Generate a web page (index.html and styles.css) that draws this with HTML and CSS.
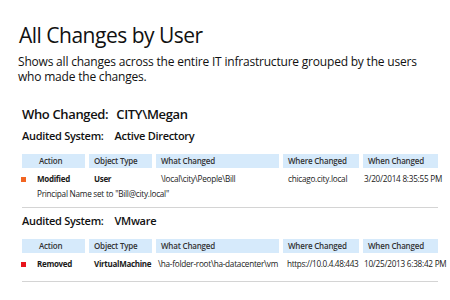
FILE: index.html
```html
<!DOCTYPE html>
<html>
<head>
<meta charset="utf-8">
<link rel="stylesheet" href="styles.css">
</head>
<body>
<div class="page">
  <h1 class="title">All Changes by User</h1>
  <p class="desc">Shows all changes across the entire IT infrastructure grouped by the users who made the changes.</p>

  <div class="who"><span>Who Changed:</span><span>CITY\Megan</span></div>

  <section class="system">
    <div class="sys-title"><span>Audited System:</span><span>Active Directory</span></div>
    <div class="grid">
      <div class="th th-action">Action</div>
      <div class="th">Object Type</div>
      <div class="th">What Changed</div>
      <div class="th">Where Changed</div>
      <div class="th">When Changed</div>

      <div class="td td-action"><span class="mark mark-modified"></span><b>Modified</b></div>
      <div class="td"><b>User</b></div>
      <div class="td">\local\city\People\Bill</div>
      <div class="td">chicago.city.local</div>
      <div class="td td-when">3/20/2014 8:35:55 PM</div>

      <div class="detail">Principal Name set to "Bill@city.local"</div>
    </div>
  </section>

  <section class="system">
    <div class="sys-title"><span>Audited System:</span><span>VMware</span></div>
    <div class="grid">
      <div class="th th-action">Action</div>
      <div class="th">Object Type</div>
      <div class="th">What Changed</div>
      <div class="th">Where Changed</div>
      <div class="th">When Changed</div>

      <div class="td td-action"><span class="mark mark-removed"></span><b>Removed</b></div>
      <div class="td"><b>VirtualMachine</b></div>
      <div class="td td-what">\ha-folder-root\ha-datacenter\vm</div>
      <div class="td td-where">https://10.0.4.48:443</div>
      <div class="td td-when">10/25/2013 6:38:42 PM</div>
    </div>
  </section>
</div>
</body>
</html>
```

FILE: styles.css
```css
html, body {
  margin: 0;
  padding: 0;
  background: #ffffff;
}
body {
  font-family: "Open Sans", "Noto Sans", sans-serif;
  color: #111;
}
.page {
  padding: 20px 0 0 19px;
  width: 431px;
}
.title {
  margin: 0;
  font-size: 21px;
  font-weight: 400;
  line-height: 30px;
  letter-spacing: -0.5px;
}
.desc {
  margin: 4px 0 0 -1px;
  font-size: 12px;
  line-height: 15px;
  max-width: 405px;
  letter-spacing: -0.2px;
}
.who {
  margin: 21px 0 0 3px;
  font-size: 13px;
  font-weight: 600;
  line-height: 18px;
  display: flex;
  gap: 8px;
  letter-spacing: -0.35px;
}
.system {
  margin-left: 3px;
  width: 416px;
}
.sys-title {
  margin-top: 5px;
  font-size: 11px;
  font-weight: 600;
  line-height: 16px;
  display: flex;
  gap: 11px;
  letter-spacing: -0.3px;
}
.grid {
  display: grid;
  grid-template-columns: 63px 63px 123px 76px 75px;
  column-gap: 4px;
  margin-top: 10px;
  font-size: 8.2px;
  line-height: 12px;
  letter-spacing: -0.25px;
  color: #1a1a1a;
  border-bottom: 1px solid #d4d4d4;
  padding-bottom: 7px;
}
.th {
  background: #d6eafb;
  font-weight: 600;
  font-size: 8px;
  letter-spacing: -0.2px;
  height: 14px;
  line-height: 14px;
  padding-left: 5px;
  white-space: nowrap;
  color: #333;
}
.th-action {
  padding-left: 17px;
}
.td {
  padding: 5px 0 0 5px;
  white-space: nowrap;
  height: 12px;
}
.td b {
  font-weight: 700;
  font-size: 8px;
  letter-spacing: -0.3px;
}
.td-what {
  padding-left: 2px;
}
.td-where {
  padding-left: 4px;
  letter-spacing: -0.35px;
}
.td-when {
  padding-left: 1px;
}
.td-action {
  display: flex;
  align-items: center;
  padding-left: 0;
  margin-left: -1px;
}
.mark {
  width: 5px;
  height: 5px;
  margin-right: 11px;
  flex: none;
}
.mark-modified { background: #f26522; }
.mark-removed { background: #e8141c; }
.detail {
  grid-column: 1 / -1;
  padding: 3px 0 0 15px;
}
.system + .system .sys-title {
  margin-top: 5px;
}
.system + .system .grid {
  margin-top: 10px;
  padding-bottom: 11px;
}
```
